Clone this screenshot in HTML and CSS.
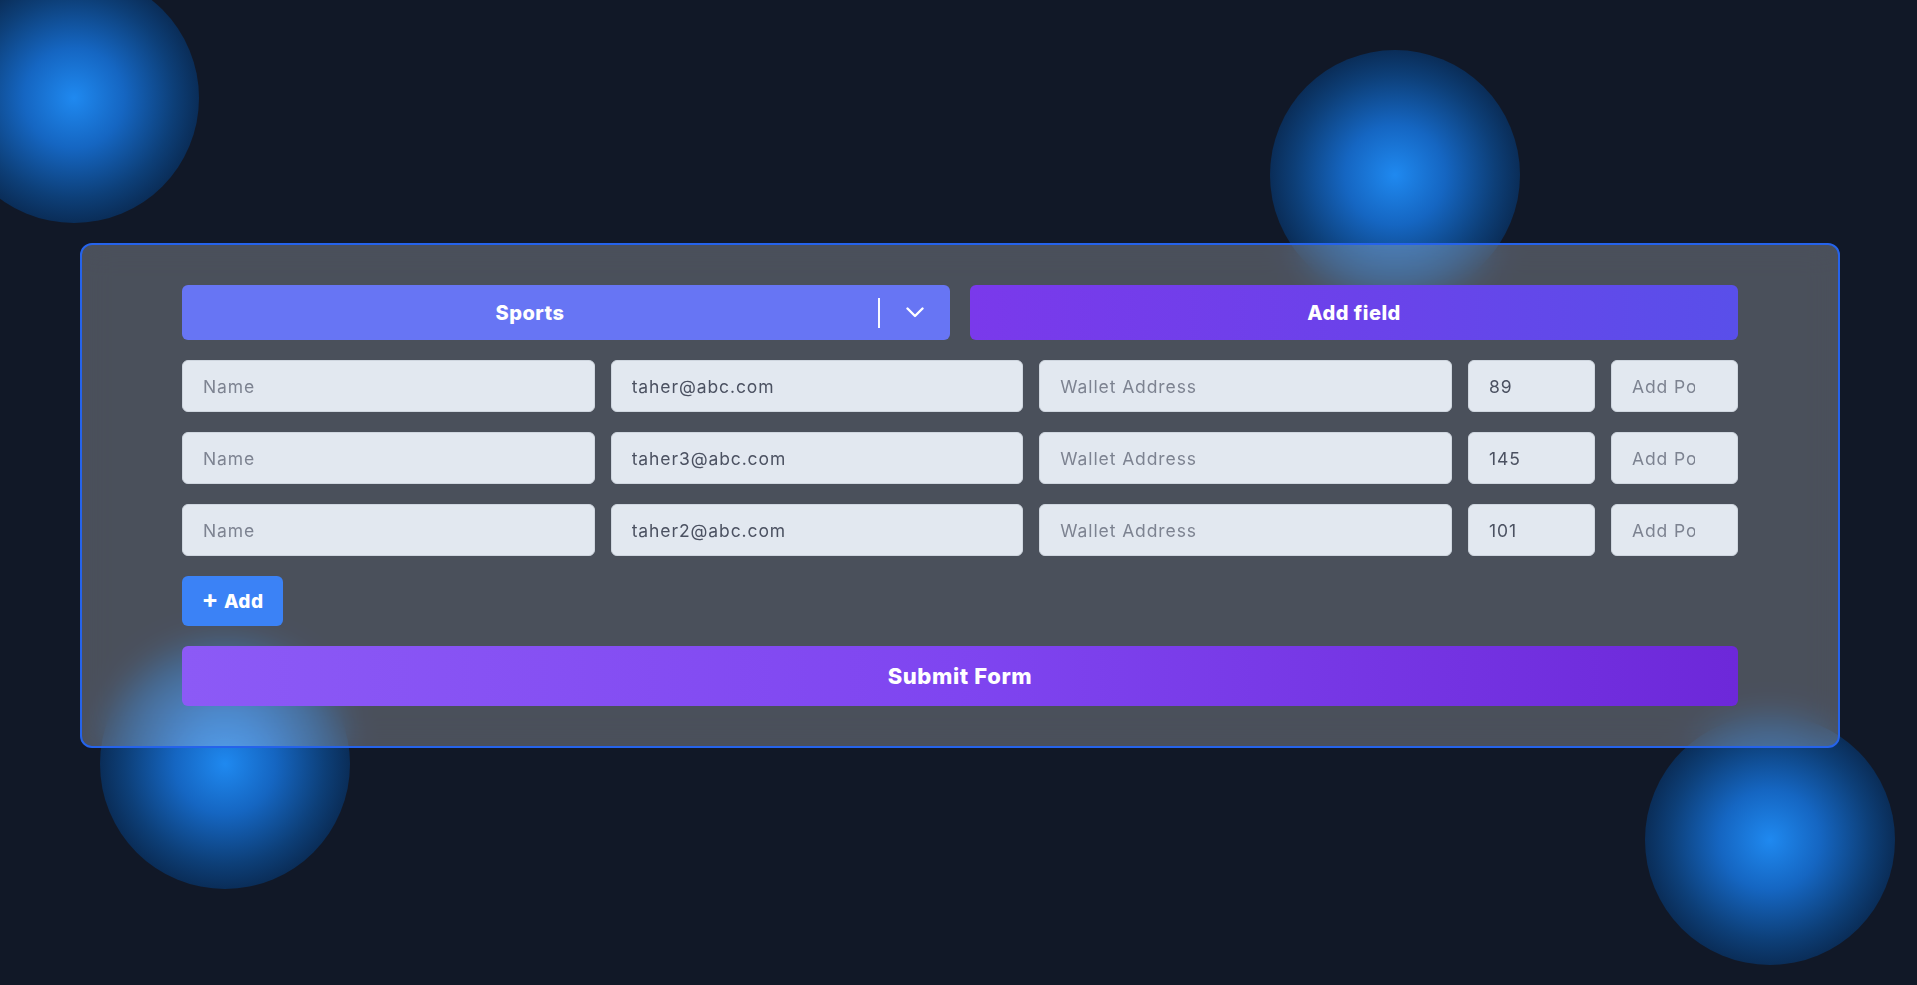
FILE: index.html
```html
<!DOCTYPE html>
<html lang="en">
<head>
<meta charset="utf-8">
<title>Form</title>
<link rel="stylesheet" href="styles.css">
</head>
<body>
<div class="stage">
  <div class="blob blob-1"></div>
  <div class="blob blob-2"></div>
  <div class="blob blob-3"></div>
  <div class="blob blob-4"></div>

  <form class="card">
    <div class="top-row">
      <div class="select">
        <div class="select-value">Sports</div>
        <div class="select-indicators">
          <span class="divider"></span>
          <span class="chevron-box">
            <svg class="chevron" width="18" height="11" viewBox="0 0 18 11"><path d="M1.5 1.5 L9 9 L16.5 1.5" fill="none" stroke="#ffffff" stroke-width="2.4" stroke-linecap="round" stroke-linejoin="round"/></svg>
          </span>
        </div>
      </div>
      <button type="button" class="btn-add-field">Add field</button>
    </div>

    <div class="field-row">
      <input class="field" type="text" placeholder="Name">
      <input class="field" type="text" value="taher@abc.com">
      <input class="field" type="text" placeholder="Wallet Address">
      <input class="field num" type="text" value="89">
      <input class="field num" type="text" placeholder="Add Points">
    </div>
    <div class="field-row">
      <input class="field" type="text" placeholder="Name">
      <input class="field" type="text" value="taher3@abc.com">
      <input class="field" type="text" placeholder="Wallet Address">
      <input class="field num" type="text" value="145">
      <input class="field num" type="text" placeholder="Add Points">
    </div>
    <div class="field-row">
      <input class="field" type="text" placeholder="Name">
      <input class="field" type="text" value="taher2@abc.com">
      <input class="field" type="text" placeholder="Wallet Address">
      <input class="field num" type="text" value="101">
      <input class="field num" type="text" placeholder="Add Points">
    </div>

    <div class="add-row">
      <button type="button" class="btn-add"><span class="plus">+</span> Add</button>
    </div>

    <button type="button" class="btn-submit">Submit Form</button>
  </form>
</div>
</body>
</html>
```

FILE: styles.css
```css
* { box-sizing: border-box; }

html, body {
  margin: 0;
  padding: 0;
  background: #111827;
  font-family: "Inter", "Liberation Sans", sans-serif;
}

.stage {
  position: relative;
  height: 100vh;
  overflow: hidden;
  display: flex;
  align-items: center;
  padding: 6px 77px 0 80px;
}

.blob {
  position: absolute;
  width: 250px;
  height: 250px;
  border-radius: 50%;
  background: radial-gradient(circle closest-side, #1f89f0 0%, #1566c2 40%, #0d3f78 80%, #0a2d58 100%);
}
.blob-1 { left: -51px; top: -27px; }
.blob-2 { left: 1270px; top: 50px; }
.blob-3 { left: 100px; top: 639px; }
.blob-4 { left: 1645px; top: 715px; }

.card {
  position: relative;
  z-index: 1;
  flex: 1;
  margin: 0;
  border: 2px solid #2563eb;
  border-radius: 12px;
  background: rgba(255, 255, 255, 0.245);
  backdrop-filter: blur(16px);
  -webkit-backdrop-filter: blur(16px);
  padding: 40px 100px 40px 100px;
  display: flex;
  flex-direction: column;
  gap: 20px;
}

.top-row {
  display: grid;
  grid-template-columns: 1fr 1fr;
  gap: 20px;
  height: 55px;
}

.select {
  display: flex;
  align-items: center;
  background: #6775f4;
  border-radius: 6px;
  color: #ffffff;
}
.select-value {
  flex: 1;
  text-align: center;
  font-weight: 800;
  font-size: 20px;
  letter-spacing: 0.5px;
}
.select-indicators {
  display: flex;
  align-items: center;
  height: 100%;
}
.divider {
  width: 2px;
  height: 30px;
  background: rgba(255, 255, 255, 0.95);
}
.chevron-box {
  width: 70px;
  display: flex;
  justify-content: center;
  align-items: center;
}
.chevron { display: block; }

.btn-add-field {
  border: none;
  border-radius: 6px;
  background: linear-gradient(90deg, #7a39eb 0%, #6b42ea 50%, #594fea 100%);
  color: #ffffff;
  font-family: inherit;
  font-weight: 800;
  font-size: 20px;
  letter-spacing: 0.5px;
  cursor: pointer;
}

.field-row {
  display: grid;
  grid-template-columns: 1fr 1fr 1fr 127px 127px;
  gap: 16px;
}

.field {
  height: 52px;
  min-width: 0;
  width: 100%;
  border: 1px solid #cfd6df;
  border-radius: 6px;
  background: #e2e8f0;
  padding: 0 20px;
  font-family: inherit;
  font-size: 17.5px;
  font-weight: 400;
  letter-spacing: 0.9px;
  color: #4b5161;
  outline: none;
}
.field::placeholder {
  color: #7d8391;
  opacity: 1;
}
.field.num { padding-right: 42px; }

.add-row {
  display: flex;
}
.btn-add {
  width: 101px;
  height: 50px;
  border: none;
  border-radius: 6px;
  background: #3b82f6;
  color: #ffffff;
  font-family: inherit;
  font-weight: 800;
  font-size: 19px;
  letter-spacing: 0.4px;
  cursor: pointer;
  display: flex;
  align-items: center;
  justify-content: center;
  gap: 5px;
}
.plus {
  font-size: 25px;
  font-weight: 700;
  line-height: 1;
  margin-top: -3px;
}

.btn-submit {
  height: 60px;
  border: none;
  border-radius: 6px;
  background: linear-gradient(90deg, #8c5af6 0%, #7f45f0 50%, #6d28d9 100%);
  color: #ffffff;
  font-family: inherit;
  font-weight: 800;
  font-size: 22px;
  letter-spacing: 0.6px;
  cursor: pointer;
}
```
